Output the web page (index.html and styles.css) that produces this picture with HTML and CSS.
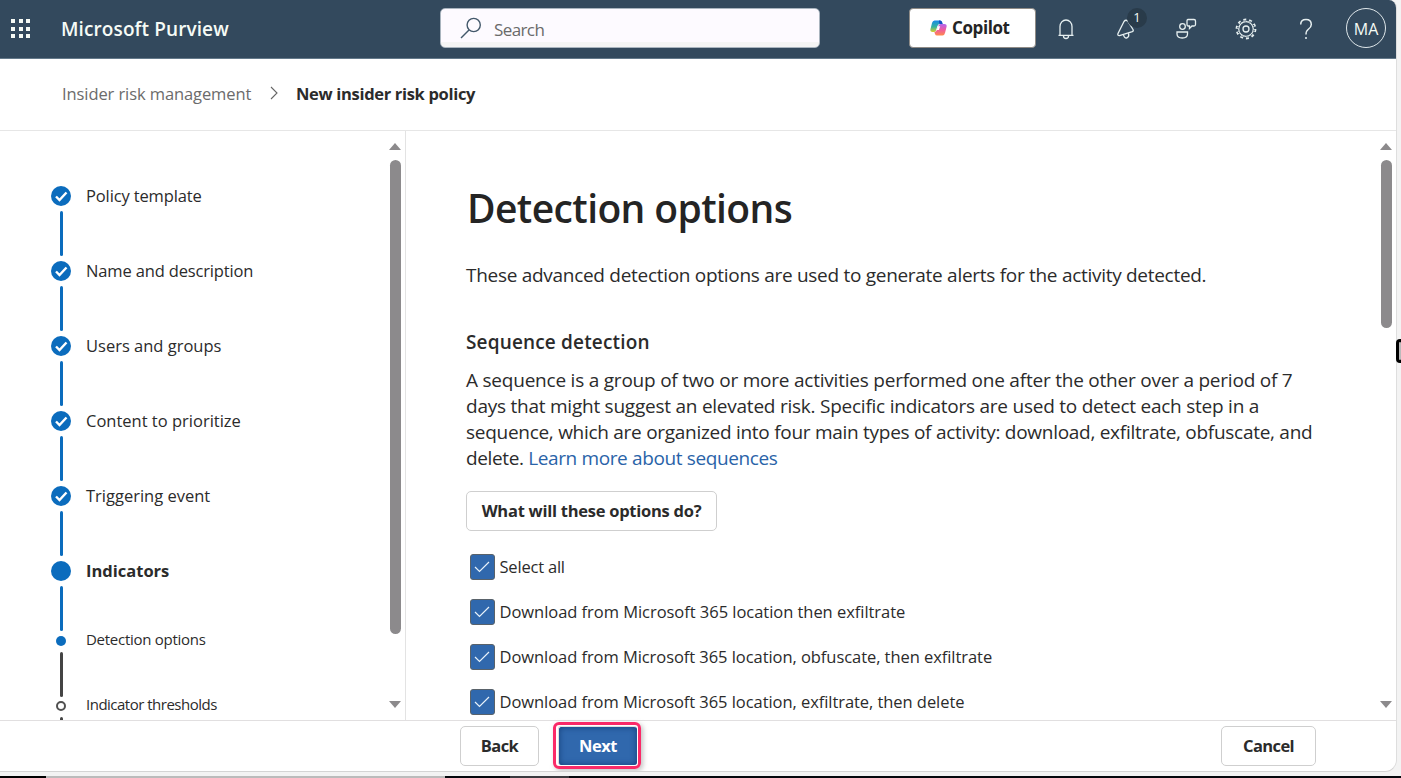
FILE: index.html
```
<!DOCTYPE html>
<html lang="en">
<head>
<meta charset="utf-8">
<title>Microsoft Purview</title>
<link rel="stylesheet" href="styles.css">
</head>
<body>
<div class="app">
  <header class="topbar">
    <svg class="waffle" width="20" height="20" viewBox="0 0 20 20" fill="#f6fbf6"><path d="M0 0h4v4H0zM8 0h4v4H8zM15 0h4v4h-4zM0 8h4v4H0zM8 8h4v4H8zM15 8h4v4h-4zM0 15h4v4H0zM8 15h4v4H8zM15 15h4v4h-4z"/></svg>
    <span class="brand">Microsoft Purview</span>
    <div class="search">
      <svg width="22" height="22" viewBox="0 0 22 22" fill="none" stroke="#43586b" stroke-width="1.4"><circle cx="13.7" cy="8" r="6.6"/><path d="M9 13L1 21"/></svg>
      <span class="search-label">Search</span>
    </div>
    <div class="actions">
      <div class="copilot">
        <svg width="17" height="16" viewBox="0 0 17 16">
          <defs>
            <linearGradient id="ga" x1="0" y1="0" x2="0" y2="1"><stop offset="0" stop-color="#1689e8"/><stop offset=".55" stop-color="#35b2a0"/><stop offset="1" stop-color="#d9cf2c"/></linearGradient>
            <linearGradient id="gb" x1="0" y1="0" x2="0" y2="1"><stop offset="0" stop-color="#b067f0"/><stop offset=".5" stop-color="#ef5aa0"/><stop offset="1" stop-color="#ff8a4a"/></linearGradient>
          </defs>
          <path fill="url(#ga)" d="M4.500 .5H10Q11.500 .5 12 2L12.600 4H10Q8 4 7.400 6L6 10.500Q5.500 12 4 12H2.500Q-.3 12 .5 9L2 3Q2.700 .5 4.500 .5Z"/>
          <path fill="#174fc4" d="M9 .5h1Q11.500 .5 12 2L12.600 4H10.500Q9.500 4 9 2.500Z"/>
          <path fill="url(#gb)" d="M12.500 15.500H7Q5.500 15.500 5 14L4.400 12Q6.200 12 6.900 10L8.500 5.500Q9 4 10.500 4H14.500Q17.300 4 16.500 7L15 13Q14.300 15.500 12.500 15.500Z"/>
          <path fill="#fff" d="M8 6.200h2.200L8.900 10H6.700z"/>
        </svg>
        <span>Copilot</span>
      </div>
      <svg class="ic" viewBox="0 0 24 24"><path d="M6 18V9.500a6 6.500 0 0 1 12 0V18M4.500 18.300h15M9.500 19a2.500 2.500 0 0 0 5 0"/></svg>
      <div class="notice">
        <svg class="ic" viewBox="0 0 24 24"><path d="M10 4.500L4 16.500Q3.200 18.700 5.500 18.600L18.300 14.700Q19.800 14 19 12.500L14 4.500Q12 2 10 4.500ZM9.500 17.800Q10.500 21.800 13 20.800T14.500 16.500"/></svg>
        <span class="badge">1</span>
      </div>
      <svg class="ic" viewBox="0 0 24 24"><circle cx="8.500" cy="9.500" r="2.800"/><path d="M3 15h10.500v2q0 4-5.250 4T3 17zM14 2.500h6q1.500 0 1.500 1.500v3.500q0 1.500-1.500 1.500h-2l-2.500 2.500V9H14q-1 0-1-1.500V4q0-1.500 1-1.500z"/></svg>
      <svg class="ic" viewBox="0 0 24 24"><circle cx="12" cy="12" r="7.300" stroke-width="1.200"/><circle cx="12" cy="12" r="3"/><circle cx="12" cy="12" r="9" stroke-width="2.800" stroke-dasharray="2.800 2.855"/><circle cx="12" cy="12" r="8.200" stroke="#33495d" stroke-width="1.200" stroke-dasharray="1.200 3.952" stroke-dashoffset="-.8"/></svg>
      <svg class="ic" viewBox="0 0 24 24"><path d="M6.700 7.500Q6.700 2.500 12 2.500T17.300 7.500Q17.300 10 14.600 12Q12 13.900 12 17.500M12 20v2" stroke-width="1.500"/></svg>
      <span class="avatar">MA</span>
    </div>
  </header>
  <nav class="crumbs">
    <span class="crumb-parent">Insider risk management</span>
    <svg width="8" height="14" viewBox="0 0 8 14" fill="none" stroke="#666" stroke-width="1.100"><path d="M1 1l6 6-6 6"/></svg>
    <span class="crumb-now">New insider risk policy</span>
  </nav>
  <div class="body">
    <aside class="steps">
      <ol class="list">
        <li class="step"><i class="mark"><svg class="tick" viewBox="0 0 20 20"><path d="M5 10.500L8.500 14 15.500 6.500"/></svg></i><span class="t1">Policy template</span></li>
        <li class="step"><i class="mark"><svg class="tick" viewBox="0 0 20 20"><path d="M5 10.500L8.500 14 15.500 6.500"/></svg></i><span class="t2">Name and description</span></li>
        <li class="step"><i class="mark"><svg class="tick" viewBox="0 0 20 20"><path d="M5 10.500L8.500 14 15.500 6.500"/></svg></i><span class="t3">Users and groups</span></li>
        <li class="step"><i class="mark"><svg class="tick" viewBox="0 0 20 20"><path d="M5 10.500L8.500 14 15.500 6.500"/></svg></i><span class="t4">Content to prioritize</span></li>
        <li class="step"><i class="mark"><svg class="tick" viewBox="0 0 20 20"><path d="M5 10.500L8.500 14 15.500 6.500"/></svg></i><span class="t5">Triggering event</span></li>
        <li class="step current"><i class="mark"></i><span class="t6">Indicators</span></li>
        <li class="step sub"><i class="mark"></i><span class="t7">Detection options</span></li>
        <li class="step sub todo"><i class="mark"></i><span class="t8">Indicator thresholds</span></li>
      </ol>
      <div class="scroll"><b class="up"></b><b class="thumb long"></b><b class="down"></b></div>
    </aside>
    <main class="main">
      <div class="content">
        <h1><span>Detection options</span></h1>
        <p class="intro"><span>These advanced detection options are used to generate alerts for the activity detected.</span></p>
        <h2><span>Sequence detection</span></h2>
        <p class="para"><span class="l1">A sequence is a group of two or more activities performed one after the other over a period of 7</span><br><span class="l2">days that might suggest an elevated risk. Specific indicators are used to detect each step in a</span><br><span class="l3">sequence, which are organized into four main types of activity: download, exfiltrate, obfuscate, and</span><br><span class="l4">delete. <a>Learn more about sequences</a></span></p>
        <div class="btn what"><span>What will these options do?</span></div>
        <div class="checks">
          <div class="check"><i class="box"><svg viewBox="0 0 16 12"><path d="M1 6l4.500 4.500L15 1"/></svg></i><span class="c1">Select all</span></div>
          <div class="check"><i class="box"><svg viewBox="0 0 16 12"><path d="M1 6l4.500 4.500L15 1"/></svg></i><span class="c2">Download from Microsoft 365 location then exfiltrate</span></div>
          <div class="check"><i class="box"><svg viewBox="0 0 16 12"><path d="M1 6l4.500 4.500L15 1"/></svg></i><span class="c3">Download from Microsoft 365 location, obfuscate, then exfiltrate</span></div>
          <div class="check"><i class="box"><svg viewBox="0 0 16 12"><path d="M1 6l4.500 4.500L15 1"/></svg></i><span class="c3">Download from Microsoft 365 location, exfiltrate, then delete</span></div>
        </div>
      </div>
      <div class="scroll"><b class="up"></b><b class="thumb short"></b><b class="down"></b></div>
    </main>
  </div>
  <footer class="foot">
    <div class="btn back"><span>Back</span></div>
    <div class="ring"><div class="next"><span>Next</span></div></div>
    <div class="btn cancel"><span>Cancel</span></div>
  </footer>
</div>
<div class="below"></div>
<div class="edge"></div>
</body>
</html>
```
FILE: styles.css
```
* { box-sizing: border-box; }
body { margin: 0; width: 1401px; height: 778px; overflow: hidden; background: #f3f3f3; font-family: "Open Sans", "Noto Sans", sans-serif; color: #2b2b2b; font-size: 16.5px; white-space: nowrap; position: relative; }
.app { width: 1397px; height: 772px; background: #fff; border-right: 1px solid #dedede; border-bottom: 1px solid #d4d4d4; border-radius: 0 8px 12px 0; overflow: hidden; display: flex; flex-direction: column; }
.topbar { height: 58.500px; flex: none; background: #33495d; display: flex; align-items: center; padding-left: 11px; color: #f6fbf6; border-bottom: 1px solid #64798a; }
.waffle { flex: none; }
.brand { width: 379px; padding-left: 30px; font-size: 19px; font-weight: 600; letter-spacing: .1px; }
.search { margin-left: 30px; margin-top: -1px; width: 380px; height: 40px; border-radius: 5px; background: linear-gradient(#fdfaff 33px, #f4f4f4 33px); border: 1px solid #a9b4be; display: flex; align-items: center; padding-left: 19px; }
.search-label { color: #6a6a6a; margin: 3px 0 0 12px; font-size: 17px; letter-spacing: -.6px; }
.actions { display: flex; align-items: center; margin-left: 89px; }
.copilot { width: 127px; height: 40px; margin-top: -2px; background: #fff; border: 1px solid #8f8b86; border-radius: 4px; display: flex; align-items: center; padding-left: 20px; gap: 5px; color: #242424; font-weight: 700; font-size: 17px; letter-spacing: -.4px; }
.ic { width: 24px; height: 24px; display: block; flex: none; fill: none; stroke: #e6eff0; stroke-width: 1.300; margin-left: 36px; }
.copilot + .ic { margin-left: 18px; }
.notice { position: relative; }
.badge { position: absolute; left: 49px; top: -9px; width: 20px; height: 20px; border-radius: 10px; background: #293b4a; font-size: 13px; line-height: 19px; text-align: center; }
.avatar { width: 40px; height: 40px; border: 1px solid #dfe7ea; border-radius: 50%; margin: -1px 0 0 28px; text-align: center; line-height: 41px; font-size: 16px; }
.crumbs { height: 72px; flex: none; border-bottom: 1px solid #e6e6e6; display: flex; align-items: center; padding: 0 0 2px 62px; }
.crumb-parent { width: 208px; color: #6b6b6b; letter-spacing: -.09px; }
.crumb-now { margin-left: 18px; font-weight: 700; letter-spacing: -.32px; }
.body { height: 589px; flex: none; display: flex; overflow: hidden; }
.steps { width: 406px; border-right: 1px solid #e3e3e3; display: flex; }
.list { list-style: none; margin: 0; padding: 55px 0 0 51px; width: 387px; flex: none; }
.step { height: 75px; display: flex; gap: 15px; line-height: 20px; position: relative; }
.mark { width: 20px; height: 20px; flex: none; border-radius: 50%; background: #0b6cbd; }
.step::before { content: ""; position: absolute; left: 8.500px; top: 25px; width: 3px; height: 45px; border-radius: 2px; background: #0b6cbd; }
.tick { width: 20px; height: 20px; display: block; fill: none; stroke: #fff; stroke-width: 2.400; }
.current { height: 70px; font-weight: 700; }
.sub { height: 65px; font-size: 15px; line-height: 17px; gap: 20px; }
.sub .mark { width: 10px; height: 10px; margin: 5px 0 0 5px; }
.sub::before { top: 21px; background: #444; }
.todo .mark { background: #fff; border: 2.500px solid #505050; }
.t1 { letter-spacing: -.13px; }
.t2 { letter-spacing: -.15px; }
.t7 { letter-spacing: -.27px; }
.t8 { letter-spacing: -.5px; }
.scroll { width: 16px; flex: none; height: 589px; display: flex; flex-direction: column; align-items: center; padding-top: 12px; }
.up, .down { border: 6px solid transparent; border-top: 0; border-bottom: 7px solid #8c8a8c; }
.down { border-top: 7px solid #8c8a8c; border-bottom: 0; margin: auto 0 12px; }
.thumb { width: 11px; border-radius: 6px; background: #8c8a8c; margin-top: 10px; }
.long { height: 474px; }
.short { height: 168px; }
.main { width: 990px; display: flex; }
.content { width: 972px; padding-left: 60px; }
h1 { margin: 47px 0 0 1px; font-size: 39px; line-height: 60px; font-weight: 600; letter-spacing: -.6px; color: #242424; }
.intro { margin: 23px 0 0; font-size: 19px; line-height: 28px; letter-spacing: -.29px; }
h2 { margin: 39px 0 0; font-size: 19px; line-height: 28px; font-weight: 600; letter-spacing: .16px; }
.para { margin: 11px 0 0; font-size: 19px; line-height: 26.300px; }
.para a { color: #2a63a8; }
.l1 { letter-spacing: -.22px; }
.l2 { letter-spacing: -.24px; }
.l3 { letter-spacing: -.28px; }
.l4 { letter-spacing: -.37px; }
.btn { border: 1px solid #cfcfcf; border-radius: 5px; height: 40px; background: #fff; display: flex; align-items: center; justify-content: center; font-weight: 700; letter-spacing: -.6px; }
.what { width: 251px; margin-top: 19px; letter-spacing: -.26px; }
.checks { padding: 23px 0 0 3.500px; }
.check { height: 45px; display: flex; gap: 5px; line-height: 26px; }
.box { width: 25px; height: 26px; flex: none; border: 1px solid #59626a; border-radius: 3px; background: #3068ad; display: flex; align-items: center; justify-content: center; }
.box svg { width: 16px; height: 12px; fill: none; stroke: #e8f2fa; stroke-width: 1.200; }
.c1 { letter-spacing: -.2px; }
.c2 { letter-spacing: -.04px; }
.c3 { letter-spacing: -.06px; }
.foot { flex: 1; border-top: 1px solid #e1dfe0; display: flex; align-items: flex-start; padding-left: 460px; }
.back { width: 79px; margin-top: 5px; }
.ring { margin: 1px 0 0 14px; width: 88px; height: 47px; border: 3.500px solid #fa2a68; border-radius: 6px; padding: 1px; box-shadow: 2px 2px 5px #9999; }
.next { height: 39px; margin-left: 1px; border: 1px solid #e0e0e0; border-width: 1px 0 0 1px; background: #3068ad; box-shadow: inset 0 0 6px #153e78; border-radius: 3px; color: #fff; font-weight: 700; letter-spacing: -.5px; text-align: center; line-height: 38px; }
.cancel { width: 95px; margin: 5px 0 0 580px; }
.below { position: absolute; left: 0; top: 776px; width: 1401px; height: 2px; background: linear-gradient(90deg, #000 46px, #bbb 46px, #bbb 445px, #05070c 445px, #05070c 510px, #3a3a3e 510px, #3a3a3e 569px, #05070c 569px); }
.edge { position: absolute; left: 1396px; top: 339px; width: 8px; height: 24px; border: 3px solid #000; border-radius: 5px; background: #bbb; }
```
